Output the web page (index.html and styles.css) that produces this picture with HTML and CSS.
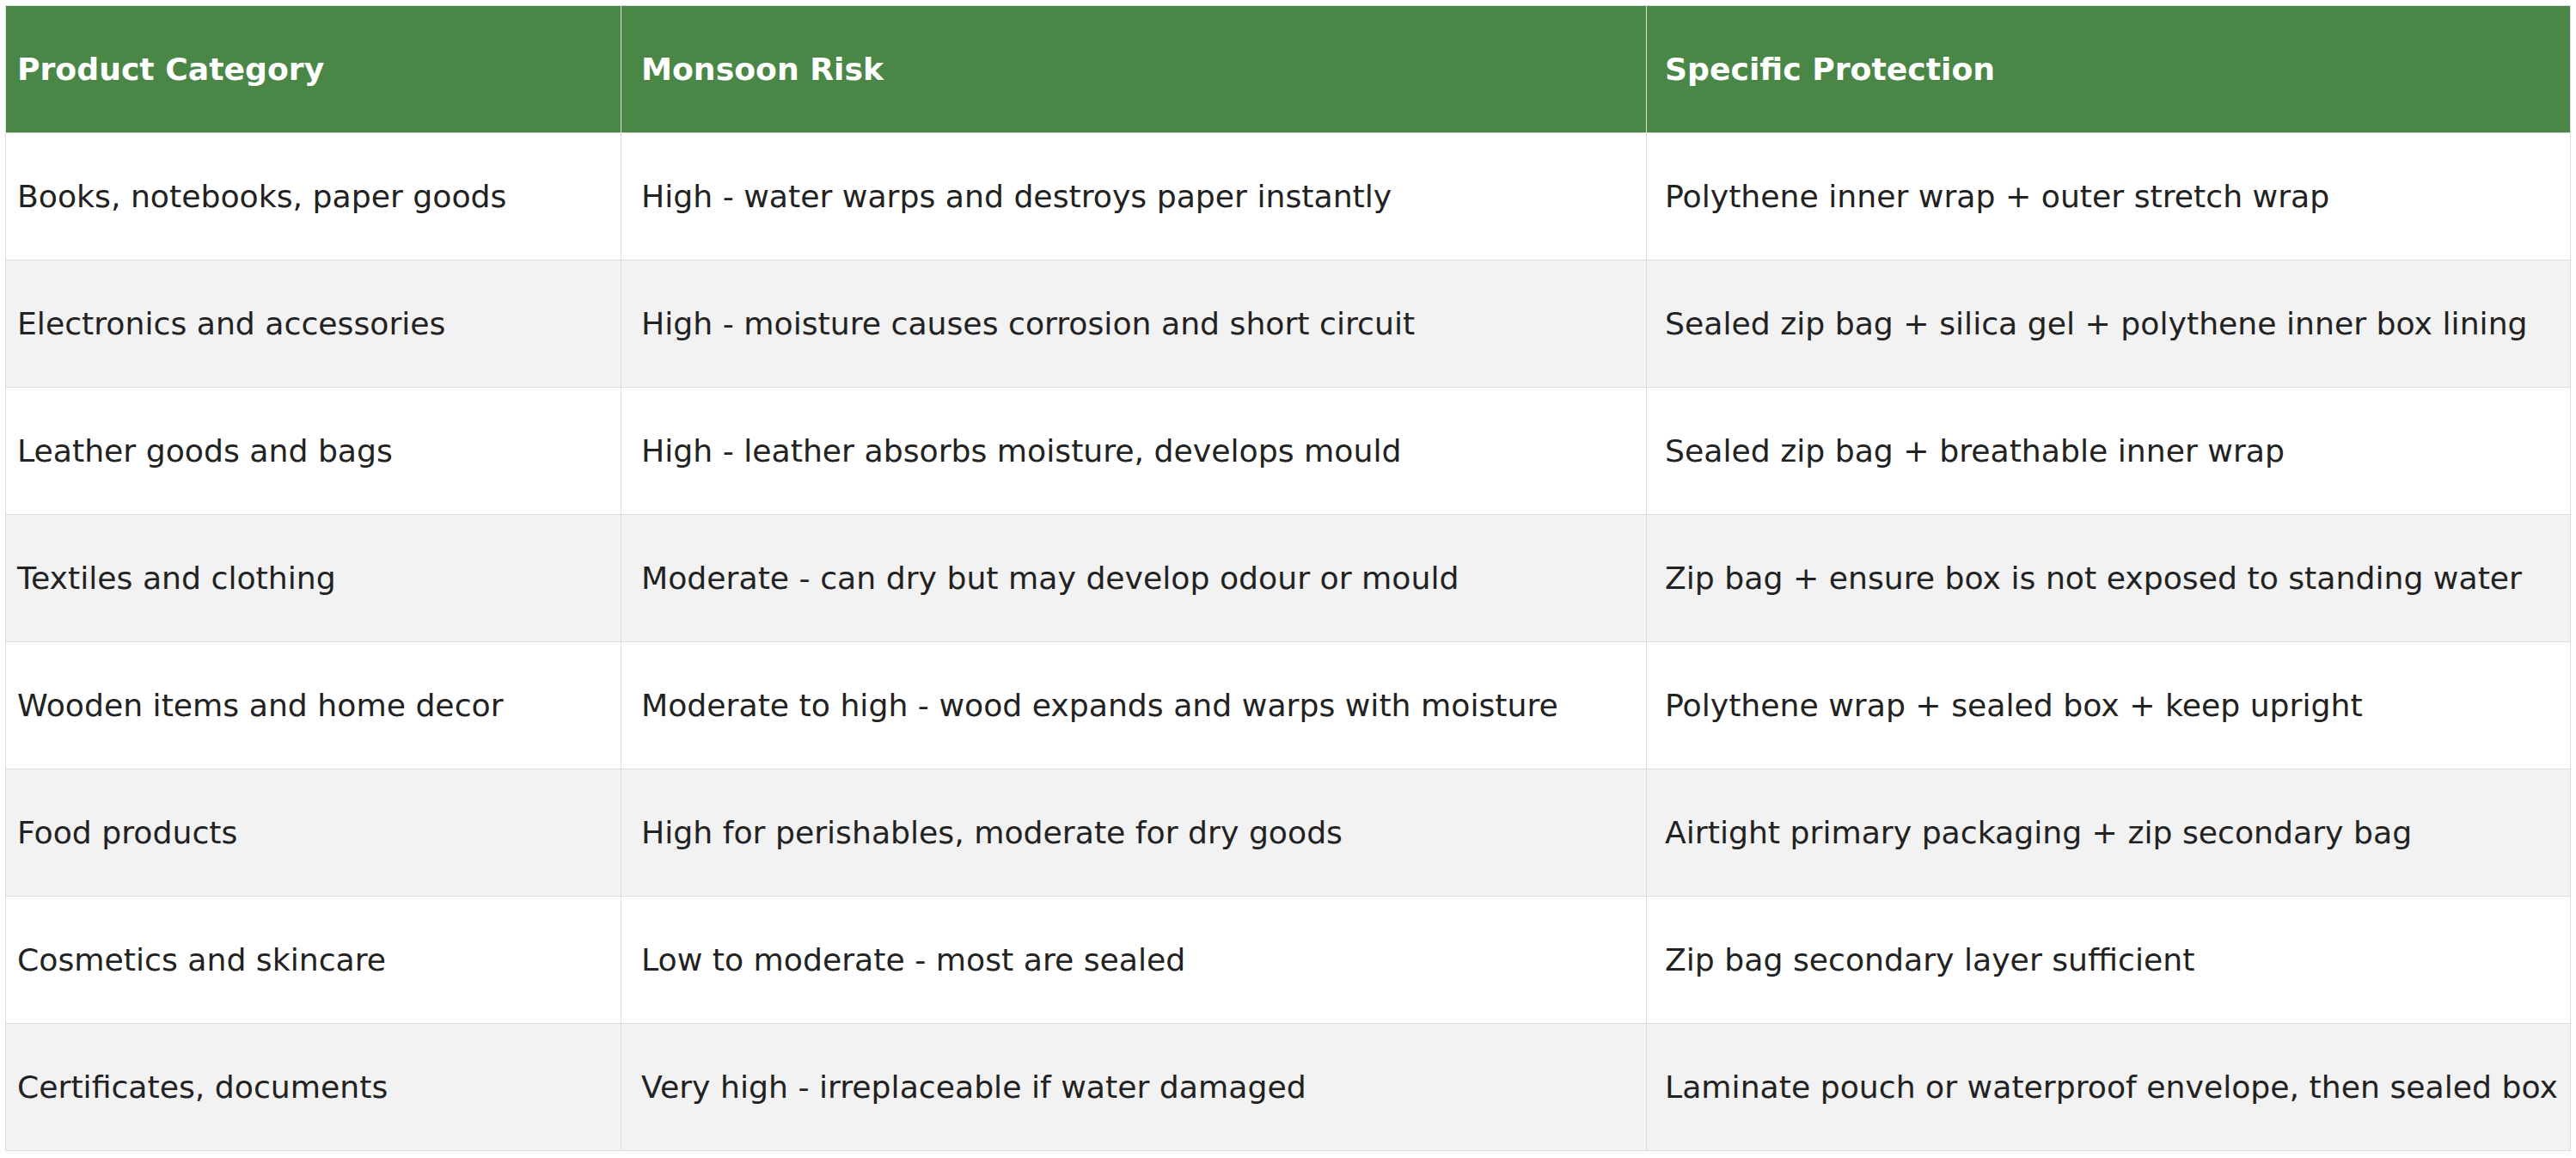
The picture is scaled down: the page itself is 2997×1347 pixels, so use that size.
FILE: index.html
```html
<!DOCTYPE html>
<html>
<head>
<meta charset="utf-8">
<link rel="stylesheet" href="styles.css">
</head>
<body>
<table class="risk-table">
  <colgroup>
    <col class="c1">
    <col class="c2">
    <col class="c3">
  </colgroup>
  <thead>
    <tr>
      <th>Product Category</th>
      <th>Monsoon Risk</th>
      <th>Specific Protection</th>
    </tr>
  </thead>
  <tbody>
    <tr><td>Books, notebooks, paper goods</td><td>High - water warps and destroys paper instantly</td><td>Polythene inner wrap + outer stretch wrap</td></tr>
    <tr><td>Electronics and accessories</td><td>High - moisture causes corrosion and short circuit</td><td>Sealed zip bag + silica gel + polythene inner box lining</td></tr>
    <tr><td>Leather goods and bags</td><td>High - leather absorbs moisture, develops mould</td><td>Sealed zip bag + breathable inner wrap</td></tr>
    <tr><td>Textiles and clothing</td><td>Moderate - can dry but may develop odour or mould</td><td>Zip bag + ensure box is not exposed to standing water</td></tr>
    <tr><td>Wooden items and home decor</td><td>Moderate to high - wood expands and warps with moisture</td><td>Polythene wrap + sealed box + keep upright</td></tr>
    <tr><td>Food products</td><td>High for perishables, moderate for dry goods</td><td>Airtight primary packaging + zip secondary bag</td></tr>
    <tr><td>Cosmetics and skincare</td><td>Low to moderate - most are sealed</td><td>Zip bag secondary layer sufficient</td></tr>
    <tr><td>Certificates, documents</td><td>Very high - irreplaceable if water damaged</td><td>Laminate pouch or waterproof envelope, then sealed box</td></tr>
  </tbody>
</table>
</body>
</html>
```

FILE: styles.css
```css
html, body {
  margin: 0;
  padding: 0;
  background: #ffffff;
}
body {
  padding: 6px;
  font-family: "DejaVu Sans", sans-serif;
}
.risk-table {
  width: 2984px;
  border-collapse: collapse;
  table-layout: fixed;
  font-size: 36.2px;
  line-height: 43px;
  color: #222222;
}
.c1 { width: 716px; }
.c2 { width: 1193px; }
.c3 { width: 1075px; }
.risk-table th,
.risk-table td {
  border: 1px solid #dddddd;
  padding: 52px 18px 52px 21px;
  text-align: left;
  vertical-align: middle;
  white-space: nowrap;
  overflow: hidden;
}
.risk-table th {
  background: #4a8646;
  color: #ffffff;
  font-weight: bold;
}
.risk-table th:first-child,
.risk-table td:first-child {
  padding-left: 13px;
}
.risk-table th:nth-child(2),
.risk-table td:nth-child(2) {
  padding-left: 23px;
}
.risk-table tbody tr:nth-child(even) td {
  background: #f2f2f2;
}
```
